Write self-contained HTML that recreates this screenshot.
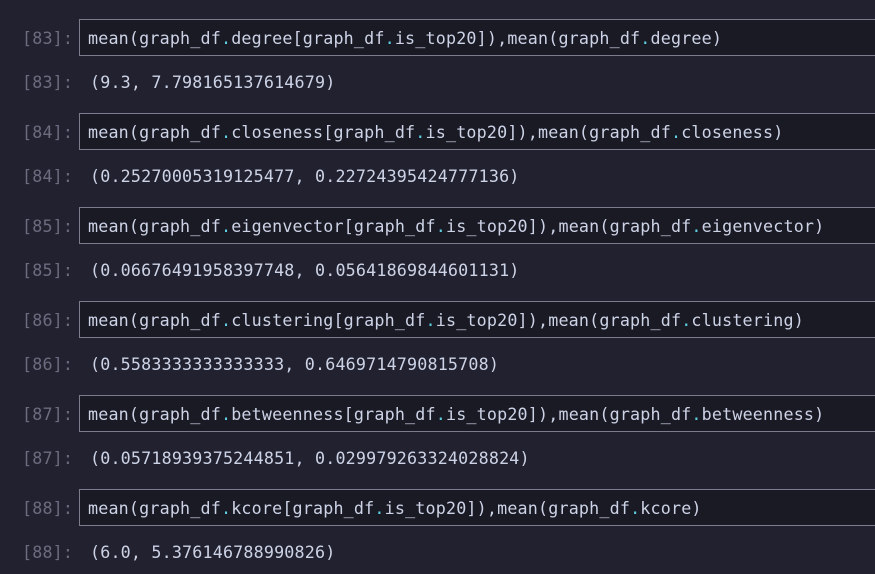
<!DOCTYPE html>
<html><head><style>
html,body{margin:0;padding:0;background:#21212f;width:875px;height:574px;overflow:hidden}
.m{font-family:"DejaVu Sans Mono","Liberation Mono",monospace;font-size:16.7px;letter-spacing:0.18px;color:#cdd3e6;position:absolute;white-space:pre;line-height:20px}
.p{color:#6c6c80;left:22px}
.box{position:absolute;left:79px;width:810px;height:35px;border:1px solid #7c7c8e;background:#1a1a25}
.d{color:#5ccfe0}
</style></head><body>
<div class="box" style="top:19px"></div>
<div class="m p" style="top:28px">[83]:</div>
<div class="m" style="left:88px;top:28px">mean(graph_df<span class="d">.</span>degree[graph_df<span class="d">.</span>is_top20]),mean(graph_df<span class="d">.</span>degree)</div>
<div class="m p" style="top:72px">[83]:</div>
<div class="m" style="left:90px;top:72px">(9.3, 7.798165137614679)</div>

<div class="box" style="top:113px"></div>
<div class="m p" style="top:122px">[84]:</div>
<div class="m" style="left:88px;top:122px">mean(graph_df<span class="d">.</span>closeness[graph_df<span class="d">.</span>is_top20]),mean(graph_df<span class="d">.</span>closeness)</div>
<div class="m p" style="top:166px">[84]:</div>
<div class="m" style="left:90px;top:166px">(0.25270005319125477, 0.22724395424777136)</div>

<div class="box" style="top:207px"></div>
<div class="m p" style="top:216px">[85]:</div>
<div class="m" style="left:88px;top:216px">mean(graph_df<span class="d">.</span>eigenvector[graph_df<span class="d">.</span>is_top20]),mean(graph_df<span class="d">.</span>eigenvector)</div>
<div class="m p" style="top:260px">[85]:</div>
<div class="m" style="left:90px;top:260px">(0.06676491958397748, 0.05641869844601131)</div>

<div class="box" style="top:301px"></div>
<div class="m p" style="top:310px">[86]:</div>
<div class="m" style="left:88px;top:310px">mean(graph_df<span class="d">.</span>clustering[graph_df<span class="d">.</span>is_top20]),mean(graph_df<span class="d">.</span>clustering)</div>
<div class="m p" style="top:354px">[86]:</div>
<div class="m" style="left:90px;top:354px">(0.5583333333333333, 0.6469714790815708)</div>

<div class="box" style="top:395px"></div>
<div class="m p" style="top:404px">[87]:</div>
<div class="m" style="left:88px;top:404px">mean(graph_df<span class="d">.</span>betweenness[graph_df<span class="d">.</span>is_top20]),mean(graph_df<span class="d">.</span>betweenness)</div>
<div class="m p" style="top:448px">[87]:</div>
<div class="m" style="left:90px;top:448px">(0.05718939375244851, 0.029979263324028824)</div>

<div class="box" style="top:489px"></div>
<div class="m p" style="top:498px">[88]:</div>
<div class="m" style="left:88px;top:498px">mean(graph_df<span class="d">.</span>kcore[graph_df<span class="d">.</span>is_top20]),mean(graph_df<span class="d">.</span>kcore)</div>
<div class="m p" style="top:542px">[88]:</div>
<div class="m" style="left:90px;top:542px">(6.0, 5.376146788990826)</div>
</body></html>
